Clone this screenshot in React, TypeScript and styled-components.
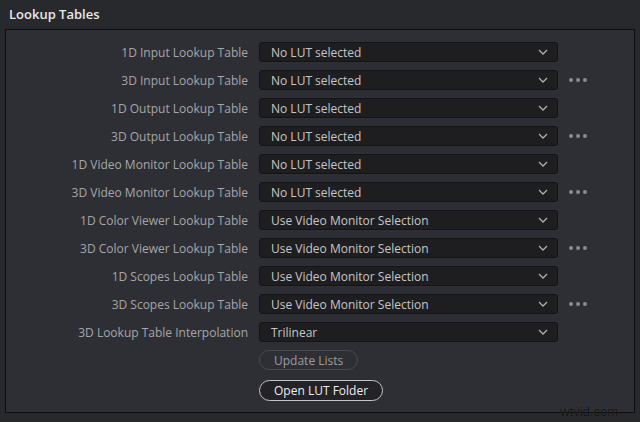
import React from 'react'
import styled, { createGlobalStyle } from 'styled-components'

const GlobalStyle = createGlobalStyle`
  html, body {
    margin: 0;
    padding: 0;
    background: #28292d;
  }
  body {
    font-family: 'Open Sans', 'Noto Sans', sans-serif;
    -webkit-font-smoothing: antialiased;
  }
`

const Page = styled.div`
  position: relative;
  width: 640px;
  height: 422px;
  background: #28292d;
  overflow: hidden;
`

const Title = styled.div`
  padding: 5px 0 0 9px;
  height: 24px;
  font-size: 13px;
  font-weight: 600;
  color: #e8e8e8;
`

const Panel = styled.div`
  margin-left: 5px;
  width: 628px;
  height: 370px;
  border: 1px solid #0e0e10;
  background: #2e2f34;
  padding-top: 12px;
  box-sizing: content-box;
`

const Grid = styled.div`
  display: grid;
  grid-template-columns: 242px 299px 30px;
  grid-auto-rows: 20px;
  column-gap: 11px;
  row-gap: 8px;
  align-items: center;
`

const Label = styled.div`
  text-align: right;
  font-size: 12px;
  color: #a6a6a8;
  white-space: nowrap;
  height: 20px;
  line-height: 22px;
`

const Select = styled.div`
  height: 20px;
  box-sizing: border-box;
  border: 1px solid #141416;
  border-radius: 3px;
  background: #1e1e21;
  display: flex;
  align-items: center;
  justify-content: space-between;
  padding: 0 9px 0 11px;
  font-size: 12px;
  color: #c6c6c8;
`

const Dots = styled.div`
  display: flex;
  gap: 3px;
  span {
    width: 4px;
    height: 4px;
    border-radius: 50%;
    background: #8a8a8e;
  }
`

const Buttons = styled.div`
  display: flex;
  flex-direction: column;
  align-items: flex-start;
  padding-left: 253px;
  margin-top: 8px;
  gap: 10px;
`

const Pill = styled.div<{ $active?: boolean }>`
  box-sizing: border-box;
  height: ${({ $active }) => ($active ? '21px' : '20px')};
  padding: 0 14px;
  border-radius: 11px;
  border: 1px solid ${({ $active }) => ($active ? '#c4c4c6' : '#4a4b50')};
  background: ${({ $active }) => ($active ? '#232327' : 'transparent')};
  color: ${({ $active }) => ($active ? '#ececee' : '#9c9ca0')};
  font-size: 12px;
  display: flex;
  align-items: center;
`

const Watermark = styled.div`
  position: absolute;
  right: 22px;
  bottom: 3px;
  font-size: 13px;
  color: #111114;
  text-shadow: 0 0 1px rgba(255, 255, 255, 0.12);
  font-family: 'Liberation Sans', sans-serif;
`

const Chevron = () => (
  <svg width="10" height="6" viewBox="0 0 10 6">
    <path d="M1 1 L5 5 L9 1" fill="none" stroke="#b0b0b4" strokeWidth="1.3" />
  </svg>
)

const rows: [string, string, boolean][] = [
  ['1D Input Lookup Table', 'No LUT selected', false],
  ['3D Input Lookup Table', 'No LUT selected', true],
  ['1D Output Lookup Table', 'No LUT selected', false],
  ['3D Output Lookup Table', 'No LUT selected', true],
  ['1D Video Monitor Lookup Table', 'No LUT selected', false],
  ['3D Video Monitor Lookup Table', 'No LUT selected', true],
  ['1D Color Viewer Lookup Table', 'Use Video Monitor Selection', false],
  ['3D Color Viewer Lookup Table', 'Use Video Monitor Selection', true],
  ['1D Scopes Lookup Table', 'Use Video Monitor Selection', false],
  ['3D Scopes Lookup Table', 'Use Video Monitor Selection', true],
  ['3D Lookup Table Interpolation', 'Trilinear', false],
]

const App = () => {
  return (
    <Page>
      <GlobalStyle />
      <Title>Lookup Tables</Title>
      <Panel>
        <Grid>
          {rows.map(([label, value, more]) => (
            <React.Fragment key={label}>
              <Label>{label}</Label>
              <Select>
                <span>{value}</span>
                <Chevron />
              </Select>
              <div>
                {more && (
                  <Dots>
                    <span />
                    <span />
                    <span />
                  </Dots>
                )}
              </div>
            </React.Fragment>
          ))}
        </Grid>
        <Buttons>
          <Pill>Update Lists</Pill>
          <Pill $active>Open LUT Folder</Pill>
        </Buttons>
      </Panel>
      <Watermark>wtvid.com</Watermark>
    </Page>
  )
}

export default App
